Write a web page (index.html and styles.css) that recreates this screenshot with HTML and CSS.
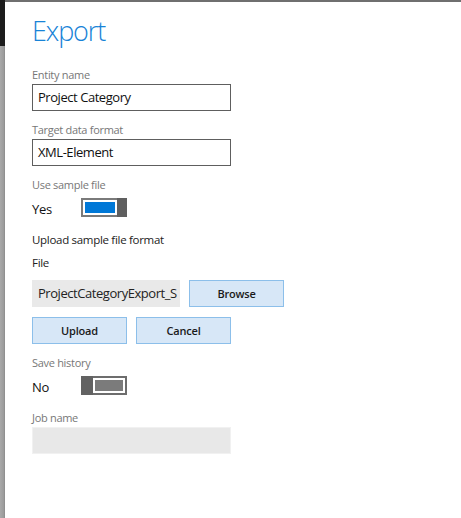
FILE: index.html
```html
<!DOCTYPE html>
<html lang="en">
<head>
<meta charset="utf-8">
<title>Export</title>
<link rel="stylesheet" href="styles.css">
</head>
<body>
<div class="frame">
  <div class="rail"><div class="rail-top"></div><div class="rail-bottom"></div></div>
  <main class="panel">
    <h1 class="title">Export</h1>

    <label class="label">Entity name</label>
    <div class="input">Project Category</div>

    <label class="label label-gap">Target data format</label>
    <div class="input">XML-Element</div>

    <label class="label label-gap">Use sample file</label>
    <div class="toggle-row">
      <span class="toggle-text">Yes</span>
      <div class="toggle on">
        <div class="track"><div class="fill"></div></div>
        <div class="thumb"></div>
      </div>
    </div>

    <div class="caption caption-upload">Upload sample file format</div>
    <div class="caption caption-file">File</div>

    <div class="file-row">
      <div class="file-field">ProjectCategoryExport_S</div>
      <button class="btn btn-browse">Browse</button>
    </div>
    <div class="btn-row">
      <button class="btn">Upload</button>
      <button class="btn">Cancel</button>
    </div>

    <label class="label label-history">Save history</label>
    <div class="toggle-row">
      <span class="toggle-text">No</span>
      <div class="toggle off">
        <div class="thumb"></div>
        <div class="track"><div class="fill"></div></div>
      </div>
    </div>

    <label class="label label-job">Job name</label>
    <div class="input input-disabled"></div>
  </main>
</div>
</body>
</html>
```

FILE: styles.css
```css
* { box-sizing: border-box; }
html, body { margin: 0; padding: 0; background: #fff; }
body {
  width: 461px;
  height: 518px;
  overflow: hidden;
  font-family: "Open Sans", "Noto Sans", sans-serif;
  color: #1a1a1a;
}
.frame { display: flex; height: 518px; }
.rail { width: 5px; display: flex; flex-direction: column; }
.rail-top { height: 46px; background: #1c1c1c; }
.rail-bottom { flex: 1; background: linear-gradient(to right, #a9a9a9 0, #9c9c9c 70%, #8a8a8a 100%); }
.panel {
  flex: 1;
  border-top: 2px solid #6f6f6f;
  padding: 0 0 0 27px;
  display: flex;
  flex-direction: column;
  align-items: flex-start;
}
.title {
  margin: 11px 0 0 0;
  font-weight: 300;
  font-size: 27px;
  line-height: 36px;
  letter-spacing: -1.1px;
  color: #1883d7;
  height: 54px;
}
.label {
  display: block;
  font-size: 11px;
  line-height: 16px;
  letter-spacing: -0.3px;
  color: #777;
  margin-bottom: 1px;
}
.label-gap { margin-top: 11px; }
.input {
  width: 199px;
  height: 27px;
  border: 1px solid #5e5e5e;
  padding: 0 5px;
  font-size: 13px;
  line-height: 25px;
  letter-spacing: -0.45px;
  color: #111;
}
.input-disabled { background: #e8e8e8; border-color: #f1f1f1; }
.toggle-row {
  margin-top: 2px;
  height: 23px;
  display: flex;
  align-items: center;
}
.toggle-text { width: 49px; font-size: 13px; letter-spacing: -0.3px; color: #111; padding-top: 3px; }
.toggle { width: 46px; height: 19px; display: flex; }
.toggle .track { flex: 1; border: 2px solid #7a7a7a; padding: 2px; background: #fff; }
.toggle.on .track { border-right: none; }
.toggle.off .track { border-left: none; }
.toggle .fill { height: 100%; }
.toggle.on .fill { background: #0078d7; }
.toggle.off .fill { background: #7b7b7b; }
.toggle .thumb { width: 10px; background: #5f5f5f; }
.toggle.off .thumb { width: 12px; background: #626262; }
.toggle.off .track { border-color: #6d6d6d; }
.caption { font-size: 11.5px; line-height: 16px; letter-spacing: -0.3px; color: #222; }
.caption-upload { margin-top: 13px; }
.caption-file { margin-top: 7px; }
.file-row { margin-top: 9px; display: flex; gap: 9px; }
.file-field {
  width: 148px;
  height: 27px;
  background: #e9e9e9;
  padding: 0 0 0 6px;
  font-size: 13px;
  line-height: 27px;
  letter-spacing: -0.45px;
  color: #222;
  white-space: nowrap;
  overflow: hidden;
}
.btn {
  width: 95px;
  height: 27px;
  background: #d7e7f7;
  border: 1px solid #8cbfea;
  font-family: inherit;
  font-size: 11px;
  font-weight: 600;
  letter-spacing: -0.2px;
  color: #1a1a1a;
  padding: 0;
  margin: 0;
}
.btn-row { margin-top: 10px; display: flex; gap: 9px; }
.label-history { margin-top: 11px; }
.label-job { margin-top: 13px; }
```
